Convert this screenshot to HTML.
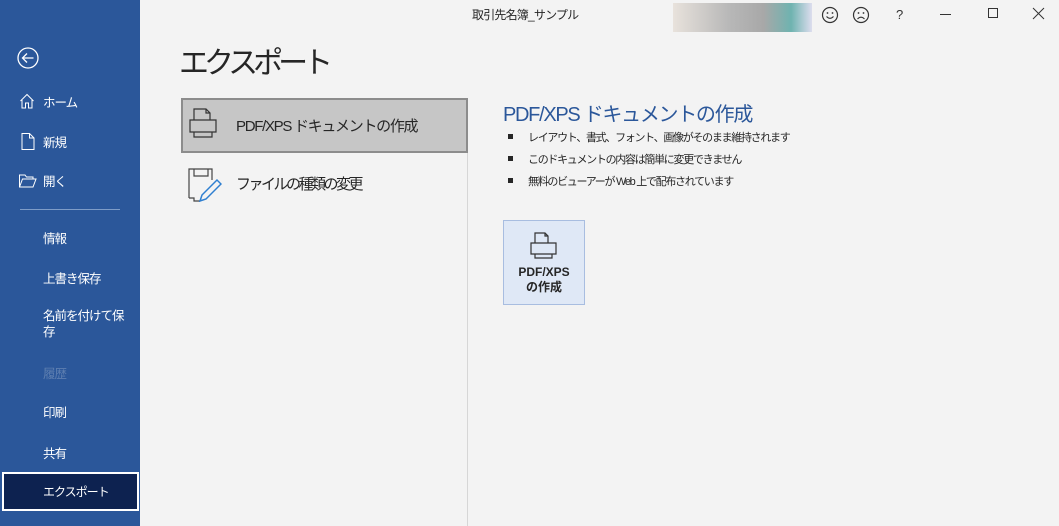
<!DOCTYPE html>
<html><head><meta charset="utf-8"><style>
*{margin:0;padding:0;box-sizing:border-box}
body{width:1059px;height:526px;background:#f3f3f3;font-family:"Liberation Sans","Noto Sans CJK JP",sans-serif;position:relative;overflow:hidden;color:#262626}
.side{position:absolute;left:0;top:0;width:140px;height:526px;background:#2b579a;color:#fff}
.a{position:absolute;font-size:13px;white-space:nowrap}
.side .a{font-size:12.5px;letter-spacing:-1px}
.ic{position:absolute}
.b{position:absolute;left:508px;width:5px;height:5px;background:#262626}
.bt{position:absolute;left:528px;font-size:11px;letter-spacing:-1.3px;white-space:nowrap}
</style></head><body>
<div class="side">
<svg class="ic" style="left:16px;top:46px" width="24" height="24" viewBox="0 0 24 24"><circle cx="12" cy="12" r="10" fill="none" stroke="#fff" stroke-width="1.3"/><path d="M6.5 12H17.5M11 7.5L6.5 12L11 16.5" fill="none" stroke="#fff" stroke-width="1.3"/></svg>
<svg class="ic" style="left:19px;top:93px" width="16" height="16" viewBox="0 0 16 16"><path d="M1.5 8L8 1.5L14.5 8M3 7V15H6.5V10H9.5V15H13V7" fill="none" stroke="#fff" stroke-width="1"/></svg>
<div class="a" style="left:43px;top:92px">ホーム</div>
<svg class="ic" style="left:21px;top:133px" width="14" height="17" viewBox="0 0 14 17"><path d="M1 .5H8.5L13 5V16.5H1ZM8.5 .5V5H13" fill="none" stroke="#fff" stroke-width="1"/></svg>
<div class="a" style="left:43px;top:132px">新規</div>
<svg class="ic" style="left:19px;top:174px" width="18" height="14" viewBox="0 0 18 14"><path d="M.5 13V1H6L7.5 3H14V5M.5 13L3.5 5H17L14 13Z" fill="none" stroke="#fff" stroke-width="1"/></svg>
<div class="a" style="left:43px;top:171px">開く</div>
<div style="position:absolute;left:20px;top:209px;width:100px;height:1px;background:#7e9cc7"></div>
<div class="a" style="left:43px;top:228px">情報</div>
<div class="a" style="left:43px;top:268px">上書き保存</div>
<div class="a" style="left:43px;top:308px;line-height:16px">名前を付けて保<br>存</div>
<div class="a" style="left:43px;top:363px;color:#5e7fb0">履歴</div>
<div class="a" style="left:43px;top:402px">印刷</div>
<div class="a" style="left:43px;top:443px">共有</div>
<div style="position:absolute;left:2px;top:472px;width:137px;height:39px;background:#0d2250;border:2px solid #fff"></div>
<div class="a" style="left:43px;top:483px;font-size:12px">エクスポート</div>
</div>
<div class="a" style="left:472px;top:6px;font-size:12px;letter-spacing:-0.8px">取引先名簿_サンプル</div>
<div style="position:absolute;left:673px;top:3px;width:139px;height:29px;background:linear-gradient(90deg,#e8e2dc,#b8b8b8 40%,#a8a8a8 65%,#6fb3b0 85%,#dde 100%)"></div>
<svg class="ic" style="left:820px;top:5px" width="20" height="20" viewBox="0 0 20 20"><circle cx="10" cy="10" r="7.5" fill="none" stroke="#333" stroke-width="1.2"/><circle cx="7.5" cy="8" r=".9" fill="#333"/><circle cx="12.5" cy="8" r=".9" fill="#333"/><path d="M6.5 11.5Q10 15 13.5 11.5" fill="none" stroke="#333" stroke-width="1.1"/></svg>
<svg class="ic" style="left:851px;top:5px" width="20" height="20" viewBox="0 0 20 20"><circle cx="10" cy="10" r="7.5" fill="none" stroke="#333" stroke-width="1.2"/><circle cx="7.5" cy="8" r=".9" fill="#333"/><circle cx="12.5" cy="8" r=".9" fill="#333"/><path d="M6.5 14Q10 10.5 13.5 14" fill="none" stroke="#333" stroke-width="1.1"/></svg>
<div class="a" style="left:896px;top:7px;font-size:13px;color:#333">?</div>
<div style="position:absolute;left:940px;top:14px;width:11px;height:1px;background:#333"></div>
<div style="position:absolute;left:988px;top:8px;width:10px;height:10px;border:1px solid #333"></div>
<svg class="ic" style="left:1032px;top:7px" width="13" height="13" viewBox="0 0 13 13"><path d="M1 1L12 12M12 1L1 12" stroke="#333" stroke-width="1"/></svg>
<div class="a" style="left:179px;top:38px;font-size:30px;letter-spacing:-5px;color:#262626">エクスポート</div>
<div style="position:absolute;left:467px;top:98px;width:1px;height:428px;background:#d6d6d6"></div>
<div style="position:absolute;left:181px;top:98px;width:287px;height:55px;background:#c6c6c6;border:2px solid #8c8c8c"></div>
<svg class="ic" style="left:188px;top:108px" width="30" height="32" viewBox="0 0 30 32"><path d="M6 12V1H18L22 5V12M18 1V5H22M2 12H28V24H2ZM6 24V29H24V24" fill="none" stroke="#333" stroke-width="1.2"/></svg>
<div class="a" style="left:236px;top:115px;font-size:15px;letter-spacing:-1.3px">PDF/XPS ドキュメントの作成</div>
<svg class="ic" style="left:188px;top:168px" width="34" height="34" viewBox="0 0 34 34"><path d="M1 30V1H24V12M1 30H6L6 33H12M6 1V8H20V1" fill="none" stroke="#444" stroke-width="1.2"/><path d="M29 12L14 27L12 33L18 31L33 16Z" fill="none" stroke="#2f7fd0" stroke-width="1.5"/></svg>
<div class="a" style="left:236px;top:173px;font-size:15px;letter-spacing:-2.5px">ファイルの種類の変更</div>
<div class="a" style="left:503px;top:98px;font-size:20px;letter-spacing:-1.3px;color:#2b579a">PDF/XPS ドキュメントの作成</div>
<div class="b" style="top:134px"></div><div class="bt" style="top:129px">レイアウト、書式、フォント、画像がそのまま維持されます</div>
<div class="b" style="top:156px"></div><div class="bt" style="top:151px">このドキュメントの内容は簡単に変更できません</div>
<div class="b" style="top:178px"></div><div class="bt" style="top:173px">無料のビューアーが Web 上で配布されています</div>
<div style="position:absolute;left:503px;top:220px;width:82px;height:85px;background:#dfe8f6;border:1px solid #a8bde0"></div>
<svg class="ic" style="left:529px;top:232px" width="30" height="30" viewBox="0 0 30 30"><path d="M6 11V1H16L19 4V11M16 1V4H19M2 11H27V22H2ZM6 22V26H23V22" fill="none" stroke="#333" stroke-width="1.2"/></svg>
<div class="a" style="left:503px;top:265px;width:82px;text-align:center;font-size:12px;font-weight:bold;line-height:15px">PDF/XPS<br>の作成</div>
</body></html>
